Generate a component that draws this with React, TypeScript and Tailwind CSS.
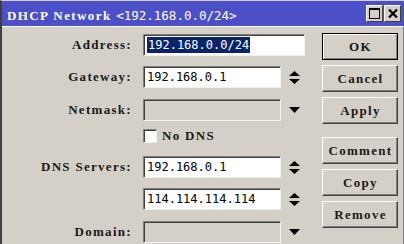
import React from 'react';

const label = "[font-family:'Liberation_Serif',serif] text-[13px] font-bold tracking-[1.3px] text-[#1a1a1a]";
const value = "[font-family:'DejaVu_Sans_Mono',monospace] text-[12px] text-black";

const SpinArrows: React.FC = () => (
  <svg width="11" height="13" viewBox="0 0 11 13" className="block">
    <polygon points="0,5 5.5,0 11,5" fill="#000" />
    <polygon points="0,8 11,8 5.5,13" fill="#000" />
  </svg>
);

const DropArrow: React.FC = () => (
  <svg width="11" height="6" viewBox="0 0 11 6" className="block">
    <polygon points="0,0 11,0 5.5,6" fill="#000" />
  </svg>
);

const Field: React.FC<{ disabled?: boolean; wide?: boolean; children?: React.ReactNode }> = ({ disabled, wide, children }) => (
  <div
    className={`h-[22px] ${wide ? 'w-[162px]' : 'w-[138px]'} border border-t-[#808080] border-l-[#808080] border-b-[#f0f0f0] border-r-[#f0f0f0] shadow-[inset_1px_1px_0_#404040] ${disabled ? 'bg-[#d4d0c8]' : 'bg-white'} flex items-center pl-[3px]`}
  >
    {children}
  </div>
);

const Row: React.FC<{ name?: string; className: string; children: React.ReactNode }> = ({ name, className, children }) => (
  <div className={`flex items-center h-[22px] ${className}`}>
    <div className={`w-[130px] text-right ${label}`}>{name ? `${name}:` : ''}</div>
    <div className="ml-[11px] flex items-center">{children}</div>
  </div>
);

const Side: React.FC<{ children?: React.ReactNode }> = ({ children }) => (
  <div className="w-[26px] h-[22px] flex items-center justify-center">{children}</div>
);

const Btn: React.FC<{ text: string; main?: boolean; className?: string }> = ({ text, main, className = '' }) => (
  <div
    className={`h-[27px] w-[76px] flex items-center justify-center pl-[1px] bg-[#d4d0c8] ${label} ${
      main
        ? 'border border-black shadow-[inset_1px_1px_0_#ffffff,inset_-1px_-1px_0_#808080]'
        : 'border border-t-white border-l-white border-b-[#404040] border-r-[#404040] shadow-[inset_-1px_-1px_0_#808080]'
    } ${className}`}
  >
    {text}
  </div>
);

const TitleButton: React.FC<{ children: React.ReactNode }> = ({ children }) => (
  <div className="w-[17px] h-[17px] bg-[#d4d0c8] border border-t-white border-l-white border-b-[#404040] border-r-[#404040] flex items-center justify-center">
    {children}
  </div>
);

export default function App() {
  return (
    <div className="w-[404px] h-[244px] overflow-hidden bg-[#d4d0c8] border-l-2 border-[#404040] border-t border-t-[#d4d0c8] flex flex-col">
      <div className="h-[25px] bg-[#4b4fc8] flex items-center justify-between pl-[5px] pr-[3px] shrink-0">
        <span className="text-white whitespace-pre">
          <span className="[font-family:'Liberation_Serif',serif] text-[13px] font-bold tracking-[1.4px]">DHCP Network </span>
          <span className="[font-family:'DejaVu_Sans_Mono',monospace] text-[12.5px]">&lt;192.168.0.0/24&gt;</span>
        </span>
        <div className="flex gap-[1px]">
          <TitleButton>
            <svg width="11" height="11" viewBox="0 0 11 11">
              <rect x="0.5" y="0.5" width="10" height="10" fill="none" stroke="#000" />
              <rect x="0" y="0" width="11" height="2" fill="#000" />
            </svg>
          </TitleButton>
          <TitleButton>
            <svg width="10" height="9" viewBox="0 0 10 9">
              <path d="M1 0.5 L9 8.5 M9 0.5 L1 8.5" stroke="#000" strokeWidth="2.2" />
            </svg>
          </TitleButton>
        </div>
      </div>
      <div className="flex-1 flex border-t border-white border-r border-r-[#808080]">
        <div className="w-[318px]">
          <Row name="Address" className="mt-[7px]">
            <Field wide>
              <span className={`${value} bg-[#0a246a] text-white leading-[16px] px-[1px]`}>192.168.0.0/24</span>
            </Field>
          </Row>
          <Row name="Gateway" className="mt-[10px]">
            <Field>
              <span className={value}>192.168.0.1</span>
            </Field>
            <Side><SpinArrows /></Side>
          </Row>
          <Row name="Netmask" className="mt-[11px]">
            <Field disabled />
            <Side><DropArrow /></Side>
          </Row>
          <div className="flex items-center h-[14px] mt-[8px] pl-[141px]">
            <div className="w-[14px] h-[14px] bg-white border border-t-[#808080] border-l-[#808080] border-b-[#f0f0f0] border-r-[#f0f0f0] shadow-[inset_1px_1px_0_#404040]" />
            <span className={`ml-[5px] ${label}`}>No DNS</span>
          </div>
          <Row name="DNS Servers" className="mt-[13px]">
            <Field>
              <span className={value}>192.168.0.1</span>
            </Field>
            <Side><SpinArrows /></Side>
          </Row>
          <Row className="mt-[10px]">
            <Field>
              <span className={value}>114.114.114.114</span>
            </Field>
            <Side><SpinArrows /></Side>
          </Row>
          <Row name="Domain" className="mt-[11px]">
            <Field disabled />
            <Side><DropArrow /></Side>
          </Row>
        </div>
        <div className="flex flex-col pt-[6px] ml-[2px]">
          <Btn text="OK" main />
          <Btn text="Cancel" className="mt-[5px]" />
          <Btn text="Apply" className="mt-[5px]" />
          <Btn text="Comment" className="mt-[13px]" />
          <Btn text="Copy" className="mt-[5px]" />
          <Btn text="Remove" className="mt-[5px]" />
        </div>
      </div>
    </div>
  );
}
